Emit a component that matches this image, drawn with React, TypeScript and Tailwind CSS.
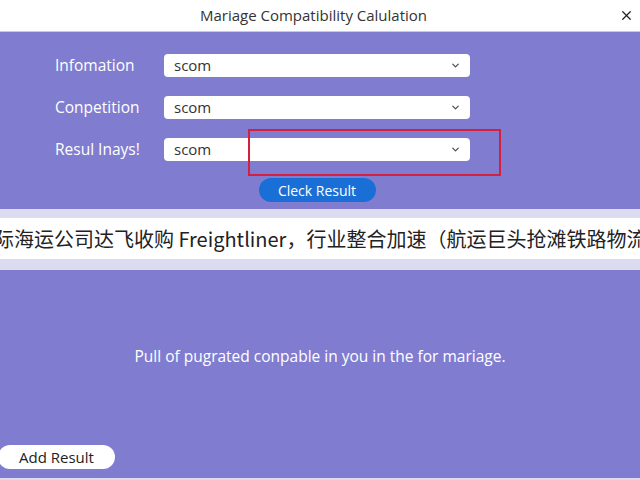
import { ChevronDown, X } from "lucide-react";

const fields = [
	{ label: "Infomation", value: "scom" },
	{ label: "Conpetition", value: "scom" },
	{ label: "Resul Inays!", value: "scom" },
];

export default function App() {
	return (
		<div
			className="relative w-[640px] h-[480px] overflow-hidden bg-[#807dd0] flex flex-col"
			style={{ fontFamily: '"Open Sans", "Noto Sans", sans-serif' }}
		>
			{/* Title bar */}
			<div className="relative h-[32px] shrink-0 bg-white border-b border-[#c9c8e6] flex items-center justify-center">
				<span className="text-[15px] text-[#333] ml-[-13px]">Mariage Compatibility Calulation</span>
				<X className="absolute right-[6px] top-[8px] w-[15px] h-[15px] text-[#222]" strokeWidth={2} />
			</div>

			{/* Form */}
			<div className="relative h-[177px] shrink-0 pt-[22px]">
				<div className="flex flex-col gap-[19px]">
					{fields.map((f) => (
						<div key={f.label} className="flex items-center h-[23px]">
							<span className="w-[164px] pl-[55px] text-[15.5px] text-white">{f.label}</span>
							<div className="w-[306px] h-[23px] bg-white rounded-[4px] flex items-center justify-between pl-[10px] pr-[9px]">
								<span className="text-[15px] text-[#333]">{f.value}</span>
								<ChevronDown className="w-[11px] h-[11px] text-[#555]" strokeWidth={3} />
							</div>
						</div>
					))}
				</div>
				<div className="flex justify-center mt-[17px] pr-[6px]">
					<button className="w-[117px] h-[24px] rounded-full bg-[#1a6fd6] text-white text-[14px]">
						Cleck Result
					</button>
				</div>
				{/* Highlight box */}
				<div className="absolute left-[248px] top-[97px] w-[253px] h-[47px] border-2 border-[#d3203f]" />
			</div>

			{/* Banner */}
			<div className="h-[61px] shrink-0 bg-[#dcdbf0] py-[9px]">
				<div className="h-[41px] bg-white flex items-center overflow-hidden">
					<span
						className="whitespace-nowrap text-[20px] text-[#222] ml-[-6px]"
						style={{ fontFamily: '"Noto Sans CJK SC", "Noto Sans", sans-serif' }}
					>
						际海运公司达飞收购 Freightliner，行业整合加速（航运巨头抢滩铁路物流
					</span>
				</div>
			</div>

			{/* Result */}
			<div className="flex-1 flex flex-col">
				<div className="h-[98px] flex items-end justify-center">
					<span className="text-[15.5px] text-white">Pull of pugrated conpable in you in the for mariage.</span>
				</div>
				<div className="flex-1 flex items-end pb-[9px]">
					<button className="w-[117px] h-[24px] ml-[-2px] rounded-full bg-white text-[#222] text-[15px]">
						Add Result
					</button>
				</div>
				<div className="h-[2px] bg-[#dcdbf0]" />
			</div>
		</div>
	);
}
